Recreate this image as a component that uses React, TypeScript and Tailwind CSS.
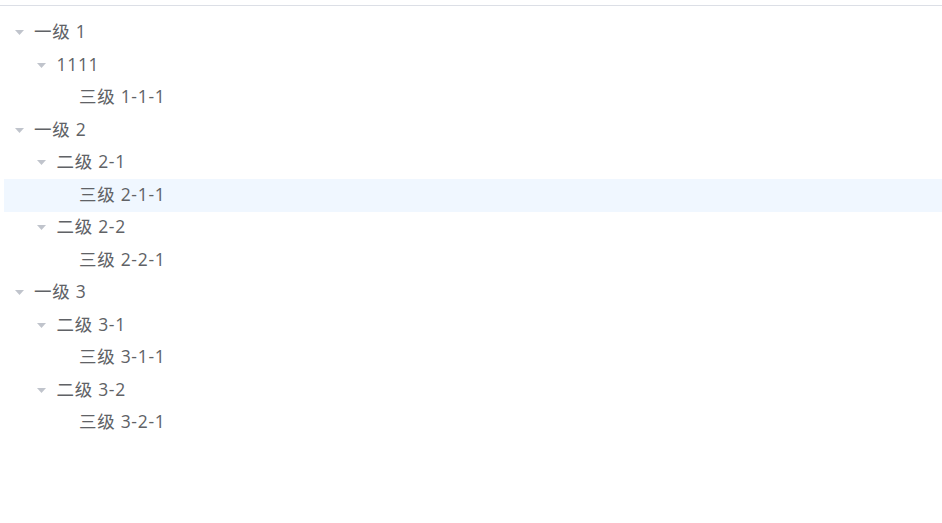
import React from "react";

type Node = { label: string; level: number; hasChildren: boolean; active?: boolean };

const nodes: Node[] = [
  { label: "一级 1", level: 0, hasChildren: true },
  { label: "1111", level: 1, hasChildren: true },
  { label: "三级 1-1-1", level: 2, hasChildren: false },
  { label: "一级 2", level: 0, hasChildren: true },
  { label: "二级 2-1", level: 1, hasChildren: true },
  { label: "三级 2-1-1", level: 2, hasChildren: false, active: true },
  { label: "二级 2-2", level: 1, hasChildren: true },
  { label: "三级 2-2-1", level: 2, hasChildren: false },
  { label: "一级 3", level: 0, hasChildren: true },
  { label: "二级 3-1", level: 1, hasChildren: true },
  { label: "三级 3-1-1", level: 2, hasChildren: false },
  { label: "二级 3-2", level: 1, hasChildren: true },
  { label: "三级 3-2-1", level: 2, hasChildren: false },
];

const pads = ["pl-0", "pl-[22.5px]", "pl-[45px]"];

function Caret({ show }: { show: boolean }) {
  return (
    <span className="w-[30px] h-full flex items-center justify-center shrink-0">
      {show && (
        <svg width="9" height="5" viewBox="0 0 9 5">
          <path d="M0 0 L9 0 L4.5 5 Z" fill="#c0c4cc" />
        </svg>
      )}
    </span>
  );
}

export default function App() {
  return (
    <div className="w-[942px] h-[523px] bg-white overflow-hidden" style={{ fontFamily: '"Open Sans", "Noto Sans CJK SC", sans-serif' }}>
      <div className="h-[6px] border-b border-[#dcdfe6]" />
      <div className="h-[10.5px]" />
      <div className="ml-[4px]">
        {nodes.map((n, i) => (
          <div
            key={i}
            className={`h-[32.5px] flex items-center ${pads[n.level]} ${n.active ? "bg-[#f0f7ff]" : ""}`}
          >
            <Caret show={n.hasChildren} />
            <span className="text-[17.5px] text-[#606266] leading-none relative -top-[1px] tracking-[0.7px]">{n.label}</span>
          </div>
        ))}
      </div>
    </div>
  );
}
